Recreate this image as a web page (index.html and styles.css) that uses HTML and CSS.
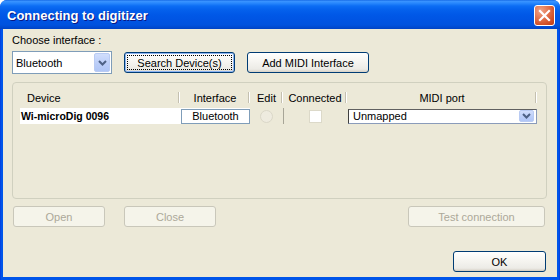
FILE: index.html
```html
<!DOCTYPE html>
<html>
<head>
<meta charset="utf-8">
<link rel="stylesheet" href="styles.css">
</head>
<body>
<div class="window">
  <div class="titlebar">
    <span class="title">Connecting to digitizer</span>
    <span class="close">
      <svg width="13" height="13" viewBox="0 0 13 13"><path d="M2 2 L11 11 M11 2 L2 11" stroke="#fff" stroke-width="2.2" stroke-linecap="square"/></svg>
    </span>
  </div>
  <div class="client">
    <div class="label">Choose interface :</div>
    <div class="toolbar">
      <div class="combo">
        <span class="combo-text">Bluetooth</span>
        <span class="drop"><svg width="9" height="6" viewBox="0 0 9 6"><path d="M1 1 L4.5 4.5 L8 1" fill="none" stroke="#4D6185" stroke-width="2"/></svg></span>
      </div>
      <button class="btn search"><span class="focus">Search Device(s)</span></button>
      <button class="btn add">Add MIDI Interface</button>
    </div>
    <div class="group">
      <div class="cols head">
        <div class="hc left">Device</div>
        <div class="hc">Interface</div>
        <div class="hc">Edit</div>
        <div class="hc">Connected</div>
        <div class="hc">MIDI port</div>
      </div>
      <div class="cols row">
        <div class="cell device">Wi-microDig 0096</div>
        <div class="cell iface"><span class="ibox">Bluetooth</span></div>
        <div class="cell edit"><span class="radio"></span></div>
        <div class="cell conn"><span class="check"></span></div>
        <div class="cell midi">
          <div class="mcombo">
            <span class="mtext">Unmapped</span>
            <span class="drop small"><svg width="9" height="6" viewBox="0 0 9 6"><path d="M1 1 L4.5 4.5 L8 1" fill="none" stroke="#4D6185" stroke-width="2"/></svg></span>
          </div>
        </div>
      </div>
    </div>
    <div class="actions">
      <button class="btn disabled open">Open</button>
      <button class="btn disabled closeb">Close</button>
      <button class="btn disabled test">Test connection</button>
    </div>
    <div class="footer">
      <button class="btn ok">OK</button>
    </div>
  </div>
</div>
</body>
</html>
```

FILE: styles.css
```css
* { box-sizing: border-box; }
html, body { margin: 0; padding: 0; }
body {
  width: 560px;
  height: 280px;
  overflow: hidden;
  font-family: "Liberation Sans", Arial, sans-serif;
  font-size: 11px;
  color: #000;
  background: #fff;
}
.window {
  width: 560px;
  height: 280px;
  background: linear-gradient(to right, #0831D9 0, #0055EA 1px, #0055EA 559px, #0831D9 560px);
  border-radius: 7px 7px 0 0;
  display: flex;
  flex-direction: column;
  overflow: hidden;
}
.titlebar {
  height: 29px;
  flex: none;
  display: flex;
  align-items: center;
  justify-content: space-between;
  padding: 0 5px 0 7px;
  background: linear-gradient(to bottom,
    #0A5EDF 0px, #3D95FF 1px, #2A89FD 3px, #0C6DF4 6px, #0460EC 10px,
    #0058E7 15px, #0054E3 20px, #0052DE 25px, #0047CC 28px, #0042C2 29px);
}
.title {
  color: #fff;
  font-family: "Liberation Sans", Arial, sans-serif;
  font-weight: bold;
  font-size: 13px;
  text-shadow: 1px 1px 0 #0A1883;
  padding-top: 1px;
}
.close {
  width: 21px;
  height: 21px;
  border: 1px solid #fff;
  border-radius: 3px;
  background: radial-gradient(circle at 30% 25%, #F0A488 0%, #E27550 40%, #D04D24 75%, #BC3C16 100%);
  display: flex;
  align-items: center;
  justify-content: center;
  margin-top: 2px;
}
.client {
  flex: 1;
  margin: 0 3px 3px 3px;
  background: #ECE9D8;
  padding: 4px 0 0 9px;
}
.label {
  height: 14px;
  line-height: 14px;
}
.toolbar {
  display: flex;
  align-items: center;
  margin-top: 4px;
  height: 23px;
}
.combo {
  width: 100px;
  height: 23px;
  border: 1px solid #7F9DB9;
  background: #fff;
  display: flex;
  align-items: center;
  justify-content: space-between;
  padding: 1px 1px 1px 3px;
}
.combo-text { line-height: 14px; }
.drop {
  width: 16px;
  height: 19px;
  border: 1px solid #B9CBF3;
  border-radius: 2px;
  background: linear-gradient(to bottom, #D1DEFC, #BACDF8 60%, #B0C6F6);
  display: flex;
  align-items: center;
  justify-content: center;
}
.drop.small { width: 15px; height: 12px; }
.btn {
  font-family: "Liberation Sans", Arial, sans-serif;
  font-size: 11px;
  color: #000;
  height: 21px;
  border: 1px solid #003C74;
  border-radius: 3px;
  background: linear-gradient(to bottom, #FFFFFF 0%, #F7F6F2 40%, #ECEBE6 85%, #D6D0C5 100%);
  padding: 0;
  display: flex;
  align-items: center;
  justify-content: center;
}
.search {
  width: 111px;
  margin-left: 12px;
  padding: 2px;
  box-shadow: inset 0 0 0 1px #8CB4F2;
}
.focus {
  flex: 1;
  align-self: stretch;
  display: flex;
  align-items: center;
  justify-content: center;
  outline: 1px dotted #000;
  outline-offset: -1px;
}
.add {
  width: 122px;
  margin-left: 12px;
}
.group {
  margin-top: 8px;
  width: 535px;
  height: 117px;
  border: 1px solid #D0D0BF;
  border-radius: 4px;
  padding: 6px 0 0 7px;
}
.cols {
  display: grid;
  grid-template-columns: 160px 70px 33px 64px 190px;
  width: 517px;
}
.head { height: 18px; }
.hc {
  line-height: 18px;
  text-align: center;
  background:
    linear-gradient(#C4C0B0, #C4C0B0) right 1px top 3px / 1px 11px no-repeat,
    linear-gradient(#FFFFFF, #FFFFFF) right 0 top 3px / 1px 11px no-repeat;
}
.hc.left { text-align: left; padding-left: 7px; }
.row {
  margin-top: 1px;
  height: 16px;
}
.cell {
  display: flex;
  align-items: center;
  height: 16px;
}
.device {
  background: #fff;
  font-weight: bold;
  font-size: 10.5px;
  padding-left: 1px;
}
.iface { background: #fff; }
.ibox {
  width: 71px;
  height: 15px;
  border: 1px solid #7F9DB9;
  background: #fff;
  display: flex;
  align-items: center;
  justify-content: center;
  margin-left: 1px;
}
.edit {
  justify-content: center;
  background: #ECE9D8;
}
.radio {
  width: 13px;
  height: 13px;
  border-radius: 50%;
  border: 1px solid #DAD7C8;
  background: #EEEBDF;
}
.conn {
  justify-content: center;
  border-left: 1px solid #A7A597;
  background: #ECE9D8;
}
.check {
  width: 13px;
  height: 13px;
  border: 1px solid #DCD9C9;
  background: #fff;
}
.midi { padding-left: 1px; }
.mcombo {
  width: 190px;
  height: 15px;
  border: 1px solid #8A9BBA;
  border-left-color: #404040;
  border-top-color: #606060;
  background: #fff;
  display: flex;
  align-items: center;
  justify-content: space-between;
  padding: 0 2px 0 4px;
}
.actions {
  display: flex;
  margin-top: 7px;
  padding-left: 1px;
}
.disabled {
  border-color: #C9C7BA;
  background: #F5F4EA;
  color: #ACA899;
}
.open { width: 92px; }
.closeb { width: 92px; margin-left: 19px; }
.test { width: 137px; margin-left: 192px; }
.footer {
  display: flex;
  justify-content: flex-end;
  margin-top: 24px;
  padding-right: 11px;
}
.ok {
  width: 93px;
  box-shadow: inset 0 -1px 0 #D6D0C5;
}
```
